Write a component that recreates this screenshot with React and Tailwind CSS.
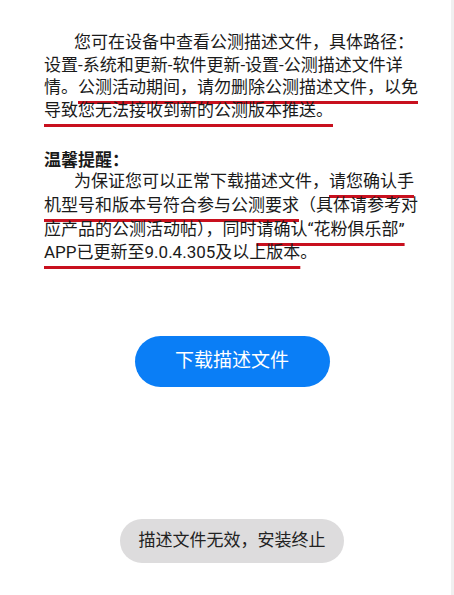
import React from "react";

const U = ({ children }) => (
  <span className="underline decoration-[#c8101e] decoration-[3px] underline-offset-[7.5px] [text-decoration-skip-ink:none]">
    {children}
  </span>
);

export default function App() {
  return (
    <div
      className="w-[454px] min-h-[595px] bg-white border-r-[3px] border-[#f0f0f0] text-[#1a1a1a] overflow-hidden"
      style={{ fontFamily: 'Roboto, "Noto Sans CJK SC", sans-serif' }}
    >
      <div className="pl-[44px] pr-[10px] pt-[31px] whitespace-nowrap">
        <p className="text-[17px] leading-[22.5px] indent-[30px]">
          您可在设备中查看公测描述文件，具体路径：
          <br />
          设置-系统和更新-软件更新-设置-公测描述文件详
          <br />
          情。
          <U>
            公测活动期间，请勿删除公测描述文件，以免
            <br />
            导致您无法接收到新的公测版本推送。
          </U>
        </p>
        <div className="mt-[29px] text-[17px] leading-[20px] font-bold">温馨提醒：</div>
        <p className="text-[17px] leading-[23.8px] indent-[30px]">
          为保证您可以正常下载描述文件，
          <U>
            请您确认手
            <br />
            机型号和版本号符合参与公测要求
          </U>
          （具体请参考对
          <br />
          应产品的公测活动帖），同时
          <U>
            请确认“花粉俱乐部”
            <br />
            APP已更新至9.0.4.305及以上版本
          </U>
          。
        </p>
      </div>
      <div className="flex flex-col items-center pl-[13px]">
        <button className="mt-[71px] w-[195px] h-[51px] rounded-full bg-[#0a7ef6] text-white text-[19px] flex items-center justify-center">
          下载描述文件
        </button>
        <div className="mt-[132px] w-[224px] h-[44px] rounded-full bg-[#dddcdd] text-[#222] text-[17px] flex items-center justify-center">
          描述文件无效，安装终止
        </div>
      </div>
    </div>
  );
}
